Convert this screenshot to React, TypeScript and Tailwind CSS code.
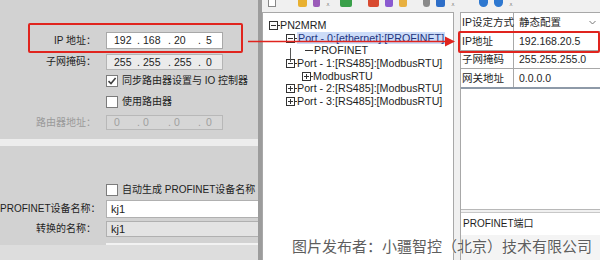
import React from "react";

const FONT = { fontFamily: '"Liberation Sans", "Noto Sans CJK SC", sans-serif' };

function IpField({ parts, className, textClass }: { parts: string[]; className: string; textClass: string }) {
  const widths = ["w-[23px]", "w-[6px]", "w-[25px]", "w-[6px]", "w-[24px]", "w-[8px]", "w-[12px]"];
  const items = [parts[0], ".", parts[1], ".", parts[2], ".", parts[3]];
  return (
    <div className={`flex items-center pl-[7px] shrink-0 ${className}`}>
      {items.map((t, i) => (
        <span key={i} className={`${widths[i]} ${textClass} text-[10.5px] leading-none`}>
          {t}
        </span>
      ))}
    </div>
  );
}

function Check({ checked }: { checked?: boolean }) {
  return (
    <div className="w-[12px] h-[12px] border border-[#7c7c7c] bg-white flex items-center justify-center shrink-0">
      {checked && (
        <svg width="10" height="10" viewBox="0 0 10 10">
          <path d="M1.5 5.2 L4 7.6 L8.6 2" stroke="#404040" strokeWidth="1.6" fill="none" />
        </svg>
      )}
    </div>
  );
}

function Label({ children, gray }: { children: React.ReactNode; gray?: boolean }) {
  return (
    <div className={`w-[97px] shrink-0 text-right pr-[1px] text-[10px] leading-none whitespace-nowrap ${gray ? "text-[#9a9a9a]" : "text-[#1e1e1e]"}`}>
      {children}
    </div>
  );
}

function Box({ plus }: { plus?: boolean }) {
  return (
    <svg width="11" height="9" viewBox="0 0 11 9" className="shrink-0">
      <rect x="0.5" y="0.5" width="8" height="8" fill="white" stroke="#333" strokeWidth="1" />
      <line x1="2" y1="4.5" x2="7" y2="4.5" stroke="#333" strokeWidth="1" />
      {plus && <line x1="4.5" y1="2" x2="4.5" y2="7" stroke="#333" strokeWidth="1" />}
      <line x1="8.5" y1="4.5" x2="11" y2="4.5" stroke="#333" strokeWidth="1" />
    </svg>
  );
}

function TreeRow({ indent, children, icon }: { indent: string; children: React.ReactNode; icon: React.ReactNode }) {
  return (
    <div className={`h-[12.7px] flex items-center ${indent}`}>
      {icon}
      {children}
    </div>
  );
}

function ToolIcon({ color, w = "w-[9px]", rounded }: { color: string; w?: string; rounded?: boolean }) {
  return <div className={`${w} h-[7px] ${color} ${rounded ? "rounded-b-full" : "rounded-b-[2px]"}`} />;
}

export default function App() {
  return (
    <div className="w-[600px] h-[260px] relative overflow-hidden flex bg-[#f0f0f0]" style={FONT}>
      {/* Left panel */}
      <div className="w-[258px] h-full bg-[#d2d2d2] flex flex-col shrink-0 overflow-hidden">
        <div className="h-[32px] shrink-0" />
        <div className="flex items-center gap-[9px] h-[17px] shrink-0">
          <Label>IP 地址：</Label>
          <IpField parts={["192", "168", "20", "5"]} className="w-[117px] h-[17px] bg-white border border-[#a8a8a8]" textClass="text-[#1e1e1e]" />
        </div>
        <div className="h-[5px] shrink-0" />
        <div className="flex items-center gap-[9px] h-[16px] shrink-0">
          <Label>子网掩码：</Label>
          <IpField parts={["255", "255", "255", "0"]} className="w-[117px] h-[16px] bg-[#ebebeb] border border-[#b4b4b4]" textClass="text-[#1e1e1e]" />
        </div>
        <div className="h-[4px] shrink-0" />
        <div className="flex items-center h-[13px] pl-[106px] gap-[4px] shrink-0">
          <Check checked />
          <span className="text-[10px] leading-none text-[#1e1e1e] whitespace-nowrap">同步路由器设置与 IO 控制器</span>
        </div>
        <div className="h-[8px] shrink-0" />
        <div className="flex items-center h-[13px] pl-[106px] gap-[4px] shrink-0">
          <Check />
          <span className="text-[10px] leading-none text-[#1e1e1e] whitespace-nowrap">使用路由器</span>
        </div>
        <div className="h-[7px] shrink-0" />
        <div className="flex items-center gap-[9px] h-[15px] shrink-0">
          <Label gray>路由器地址：</Label>
          <IpField parts={["0", "0", "0", "0"]} className="w-[117px] h-[15px] bg-[#d6d6d6] border border-[#b8b8b8]" textClass="text-[#a0a0a0]" />
        </div>
        <div className="h-[9px] shrink-0" />
        <div className="h-[7px] bg-[#ededed] shrink-0" />
        <div className="h-[38px] shrink-0" />
        <div className="flex items-center h-[12px] pl-[106px] gap-[4px] shrink-0">
          <Check />
          <span className="text-[10px] leading-none text-[#1e1e1e] whitespace-nowrap">自动生成 PROFINET设备名称</span>
        </div>
        <div className="h-[4px] shrink-0" />
        <div className="flex items-center gap-[9px] h-[18px] shrink-0">
          <Label>PROFINET设备名称：</Label>
          <div className="w-[160px] h-[18px] bg-white border border-[#b0b0b0] shrink-0 flex items-center pl-[4px] text-[11px] leading-none text-[#1e1e1e]">kj1</div>
        </div>
        <div className="h-[3px] shrink-0" />
        <div className="flex items-center gap-[9px] h-[16px] shrink-0">
          <Label>转换的名称：</Label>
          <div className="w-[160px] h-[16px] bg-[#e3e3e3] border border-[#b0b0b0] shrink-0 flex items-center pl-[4px] text-[11px] leading-none text-[#1e1e1e]">kj1</div>
        </div>
        <div className="h-[6px] shrink-0" />
        <div className="h-[2px] ml-[106px] bg-[#f2f2f2] shrink-0" />
        <div className="flex-1 bg-[#dddddd]" />
      </div>
      <div className="w-[4px] h-full bg-[#9c9c9c] shrink-0" />

      {/* Right window */}
      <div className="flex-1 h-full flex flex-col bg-[#f0f0f0]">
        <div className="h-[12px] flex items-start gap-[6px] pl-[4px] shrink-0">
          <div className="w-[8px] h-[7px] border border-t-0 border-[#888] bg-white ml-[2px]" />
          <div className="w-[10px]" />
          <ToolIcon color="bg-[#e8b030]" />
          <ToolIcon color="bg-[#9a5ab8]" w="w-[7px]" />
          <div className="w-[8px] text-[7px] leading-[9px] text-[#555]">⩡</div>
          <ToolIcon color="bg-[#3aa04a]" w="w-[12px]" />
          <div className="w-[4px]" />
          <ToolIcon color="bg-[#d84a30]" w="w-[11px]" />
          <ToolIcon color="bg-[#8a5ad0]" w="w-[8px]" />
          <ToolIcon color="bg-[#e8b040]" w="w-[8px]" />
          <div className="w-[4px]" />
          <ToolIcon color="bg-[#8a8a8a]" w="w-[7px]" rounded />
          <ToolIcon color="bg-[#2e6ec8]" w="w-[9px]" />
          <div className="w-[8px] text-[7px] leading-[9px] text-[#555]">⩡</div>
          <div className="w-[8px]" />
          <ToolIcon color="bg-[#2e78d0]" w="w-[9px]" rounded />
          <ToolIcon color="bg-[#2e78d0]" w="w-[9px]" rounded />
          <div className="w-[8px] text-[7px] leading-[9px] text-[#555]">⩡</div>
        </div>
        <div className="flex-1 flex min-h-0">
          {/* Tree panel */}
          <div className="w-[192px] h-full bg-white border-l border-t border-r border-[#a8a8a8] shrink-0 pt-[6px] pl-[6px] text-[10.7px] text-[#1e1e1e] relative">
            <TreeRow indent="" icon={<Box />}>
              <span className="leading-none">PN2MRM</span>
            </TreeRow>
            <TreeRow indent="pl-[17px]" icon={<Box />}>
              <span className="leading-none bg-[#ccdcf8] text-[#1f3580] px-[1px] py-[1px] whitespace-nowrap">Port - 0:[ethernet]:[PROFINET]</span>
            </TreeRow>
            <TreeRow indent="pl-[36px]" icon={<div className="w-[8px] h-px bg-[#333] mr-[1px]" />}>
              <span className="leading-none">PROFINET</span>
            </TreeRow>
            <TreeRow indent="pl-[17px]" icon={<Box />}>
              <span className="leading-none whitespace-nowrap">Port - 1:[RS485]:[ModbusRTU]</span>
            </TreeRow>
            <TreeRow indent="pl-[33px]" icon={<Box plus />}>
              <span className="leading-none">ModbusRTU</span>
            </TreeRow>
            <TreeRow indent="pl-[17px]" icon={<Box plus />}>
              <span className="leading-none whitespace-nowrap">Port - 2:[RS485]:[ModbusRTU]</span>
            </TreeRow>
            <TreeRow indent="pl-[17px]" icon={<Box plus />}>
              <span className="leading-none whitespace-nowrap">Port - 3:[RS485]:[ModbusRTU]</span>
            </TreeRow>
            <div className="absolute left-[27px] top-[35px] w-px h-[14px] bg-[#555]" />
          </div>
          <div className="w-[6px] shrink-0" />
          {/* Properties panel */}
          <div className="flex-1 h-full flex flex-col border-l border-[#a8a8a8]">
            <div className="bg-white h-[198px] flex flex-col border-b border-[#b8b8b8] shrink-0">
              <div className="grid grid-cols-[53px_1fr] text-[10.5px] leading-none text-[#1e1e1e] border-t border-[#a8a8a8]">
                <div className="h-[19px] flex items-center pl-[1px] border-r border-b border-[#a8a8a8] whitespace-nowrap">IP设定方式</div>
                <div className="h-[19px] flex items-center pl-[5px] border-b border-[#a8a8a8] justify-between pr-[4px]">
                  <span>静态配置</span>
                  <svg width="7" height="5" viewBox="0 0 7 5">
                    <path d="M0.5 1 L3.5 4 L6.5 1" stroke="#777" strokeWidth="1" fill="none" />
                  </svg>
                </div>
                <div className="h-[19px] flex items-center pl-[1px] border-r border-b border-[#a8a8a8]">IP地址</div>
                <div className="h-[19px] flex items-center pl-[5px] border-b border-[#a8a8a8]">192.168.20.5</div>
                <div className="h-[18px] flex items-center pl-[1px] border-r border-b border-[#a8a8a8]">子网掩码</div>
                <div className="h-[18px] flex items-center pl-[5px] border-b border-[#a8a8a8]">255.255.255.0</div>
                <div className="h-[18px] flex items-center pl-[1px] border-r border-[#a8a8a8]">网关地址</div>
                <div className="h-[18px] flex items-center pl-[5px]">0.0.0.0</div>
              </div>
              <div className="h-[2px] bg-[#8e9aa8]" />
            </div>
            <div className="h-[2px]" />
            <div className="h-[23px] bg-white border-t border-[#c8c8c8] flex items-center pl-[2px] text-[10px] leading-none text-[#1e1e1e]">PROFINET端口</div>
            <div className="flex-1 bg-[#f4f4f4]" />
          </div>
        </div>
      </div>

      {/* Annotations */}
      <div className="absolute left-[28px] top-[23px] w-[215px] h-[30px] border-2 border-[#e0241e] rounded-[2px]" />
      <div className="absolute left-[458px] top-[31px] w-[142px] h-[22px] border-2 border-[#e0241e] rounded-[2px]" />
      <svg className="absolute left-[248px] top-[35px]" width="210" height="14" viewBox="0 0 210 14">
        <line x1="0" y1="6.5" x2="200" y2="6.5" stroke="#e0241e" strokeWidth="1.6" />
        <path d="M197 1.5 L207 6.5 L197 11.5 Z" fill="#e0241e" />
      </svg>
      <div
        className="absolute left-[292px] top-[239px] text-[15px] leading-none text-[#5e5e5e] whitespace-nowrap"
        style={{ textShadow: "0 0 2px #ffffff, 0 0 1px #ffffff" }}
      >
        图片发布者：小疆智控（北京）技术有限公司
      </div>
    </div>
  );
}
